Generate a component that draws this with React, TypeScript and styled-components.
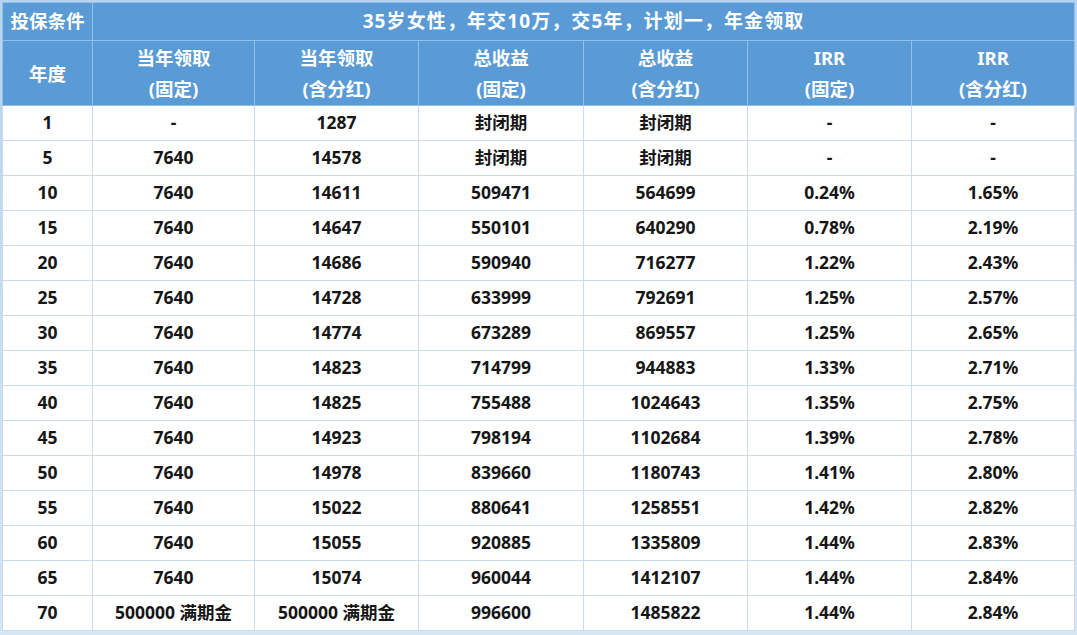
import styled, { createGlobalStyle } from 'styled-components'

const GlobalStyle = createGlobalStyle`
  html, body {
    margin: 0;
    padding: 0;
    background: #ffffff;
  }
  body {
    font-family: "Noto Sans", "Noto Sans CJK SC", sans-serif;
  }
`

const Frame = styled.div`
  width: 1077px;
  height: 635px;
  box-sizing: border-box;
  padding: 2px 3px 4px 2px;
  background: linear-gradient(180deg, #b6d4ef 0%, #d5e6f5 100%);
`

const Table = styled.table`
  width: 100%;
  border-collapse: collapse;
  table-layout: fixed;
  background: #ffffff;
`

const TitleCell = styled.th<{ wide?: boolean }>`
  height: 37px;
  padding: 0;
  background: #5a9bd6;
  color: #ffffff;
  font-size: ${(p) => (p.wide ? '19px' : '18.5px')};
  font-weight: 700;
  letter-spacing: ${(p) => (p.wide ? '1.1px' : '0')};
  line-height: 1;
  border: 1px solid #93c0ea;
  text-align: center;
  vertical-align: middle;
`

const HeadCell = styled.th`
  height: 64px;
  padding: 0;
  background: #5a9bd6;
  color: #ffffff;
  font-size: 18.5px;
  font-weight: 700;
  line-height: 31px;
  border: 1px solid #93c0ea;
  text-align: center;
  vertical-align: middle;
`

const BodyCell = styled.td`
  height: 34px;
  padding: 0;
  color: #161616;
  font-size: 17.5px;
  font-weight: 700;
  line-height: 1;
  border: 1px solid #ccdbe7;
  text-align: center;
  vertical-align: middle;
`

const columnWidths = [90, 162, 164, 165, 164, 164, 163]

const headers: [string, string][] = [
  ['当年领取', '(固定)'],
  ['当年领取', '(含分红)'],
  ['总收益', '(固定)'],
  ['总收益', '(含分红)'],
  ['IRR', '(固定)'],
  ['IRR', '(含分红)'],
]

const rows: string[][] = [
  ['1', '-', '1287', '封闭期', '封闭期', '-', '-'],
  ['5', '7640', '14578', '封闭期', '封闭期', '-', '-'],
  ['10', '7640', '14611', '509471', '564699', '0.24%', '1.65%'],
  ['15', '7640', '14647', '550101', '640290', '0.78%', '2.19%'],
  ['20', '7640', '14686', '590940', '716277', '1.22%', '2.43%'],
  ['25', '7640', '14728', '633999', '792691', '1.25%', '2.57%'],
  ['30', '7640', '14774', '673289', '869557', '1.25%', '2.65%'],
  ['35', '7640', '14823', '714799', '944883', '1.33%', '2.71%'],
  ['40', '7640', '14825', '755488', '1024643', '1.35%', '2.75%'],
  ['45', '7640', '14923', '798194', '1102684', '1.39%', '2.78%'],
  ['50', '7640', '14978', '839660', '1180743', '1.41%', '2.80%'],
  ['55', '7640', '15022', '880641', '1258551', '1.42%', '2.82%'],
  ['60', '7640', '15055', '920885', '1335809', '1.44%', '2.83%'],
  ['65', '7640', '15074', '960044', '1412107', '1.44%', '2.84%'],
  ['70', '500000 满期金', '500000 满期金', '996600', '1485822', '1.44%', '2.84%'],
]

const App = () => {
  return (
    <>
      <GlobalStyle />
      <Frame>
        <Table>
          <colgroup>
            {columnWidths.map((w, i) => (
              <col key={i} style={{ width: w }} />
            ))}
          </colgroup>
          <thead>
            <tr>
              <TitleCell>投保条件</TitleCell>
              <TitleCell wide colSpan={6}>
                35岁女性，年交10万，交5年，计划一，年金领取
              </TitleCell>
            </tr>
            <tr>
              <HeadCell>年度</HeadCell>
              {headers.map(([top, bottom], i) => (
                <HeadCell key={i}>
                  {top}
                  <br />
                  {bottom}
                </HeadCell>
              ))}
            </tr>
          </thead>
          <tbody>
            {rows.map((row, r) => (
              <tr key={r}>
                {row.map((cell, c) => (
                  <BodyCell key={c}>{cell}</BodyCell>
                ))}
              </tr>
            ))}
          </tbody>
        </Table>
      </Frame>
    </>
  )
}

export default App
